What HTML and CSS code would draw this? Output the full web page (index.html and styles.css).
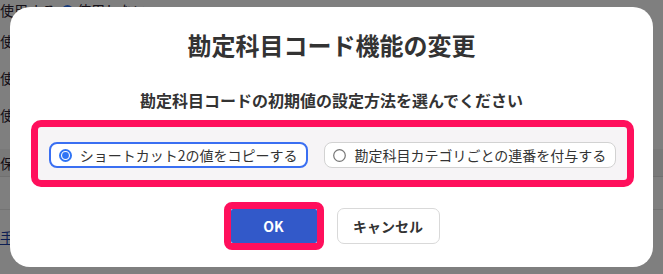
FILE: index.html
```html
<!DOCTYPE html>
<html lang="ja">
<head>
<meta charset="utf-8">
<title>勘定科目コード機能の変更</title>
<link rel="stylesheet" href="styles.css">
</head>
<body>
<div class="page">
  <div class="row first">使用する <span class="bg-radio"></span>使用しない</div>
  <div class="row">使用する</div>
  <div class="row">使用する</div>
  <div class="row">使用する</div>
  <div class="row band">保存する</div>
  <div class="row line"></div>
  <div class="row linkrow"><a class="link" href="#">手続き</a></div>
</div>
<div class="overlay">
  <div class="dialog">
    <h1 class="title">勘定科目コード機能の変更</h1>
    <p class="lead">勘定科目コードの初期値の設定方法を選んでください</p>
    <div class="highlight">
      <div class="options">
        <label class="option selected">
          <svg class="radio" width="13" height="13" viewBox="0 0 13 13"><circle cx="6.5" cy="6.5" r="5.5" fill="#fff" stroke="#2f74f5" stroke-width="2"/><circle cx="6.5" cy="6.5" r="3.4" fill="#2f74f5"/></svg>
          <span>ショートカット2の値をコピーする</span>
        </label>
        <label class="option">
          <svg class="radio" width="13" height="13" viewBox="0 0 13 13"><circle cx="6.5" cy="6.5" r="5.8" fill="#fff" stroke="#767676" stroke-width="1.2"/></svg>
          <span>勘定科目カテゴリごとの連番を付与する</span>
        </label>
      </div>
    </div>
    <div class="actions">
      <div class="ok-mark"><button class="btn primary">OK</button></div>
      <button class="btn secondary">キャンセル</button>
    </div>
  </div>
</div>
</body>
</html>
```
FILE: styles.css
```css
html, body {
  margin: 0;
  padding: 0;
}
body {
  width: 663px;
  height: 274px;
  overflow: hidden;
  background: #ffffff;
  font-family: "Noto Sans CJK JP", "Noto Sans", sans-serif;
  color: #333333;
}
.page {
  display: flex;
  flex-direction: column;
  font-size: 14px;
  color: #2a2030;
}
.row {
  height: 37px;
  line-height: 20px;
  display: flex;
  align-items: center;
  white-space: nowrap;
  box-sizing: border-box;
}
.row.first {
  height: 20px;
  margin-bottom: 2px;
}
.bg-radio {
  display: inline-block;
  width: 11px;
  height: 11px;
  border-radius: 50%;
  border: 2px solid #2f74f5;
  box-sizing: border-box;
  margin: 0 4px 0 6px;
  background: radial-gradient(circle, #2f74f5 45%, #fff 50%);
}
.row.band {
  background: #f2f2f2;
  height: 28px;
  margin-top: 16px;
  border-bottom: 1px solid #e0e0e0;
}
.row.line {
  height: 33px;
  border-bottom: 1px solid #e6e6e6;
}
.row.linkrow {
  height: 40px;
  margin-top: 7px;
}
.link {
  color: #1a3ea8;
  text-decoration: underline;
}
.overlay {
  position: fixed;
  inset: 0;
  background: rgba(0, 0, 0, 0.5);
  display: flex;
  align-items: center;
  justify-content: center;
}
.dialog {
  width: 643px;
  box-sizing: border-box;
  background: #ffffff;
  border-radius: 20px;
  padding: 22px 0 17px;
  display: flex;
  flex-direction: column;
  align-items: center;
}
.title {
  margin: 0 0 27px;
  font-size: 24px;
  line-height: 32px;
  font-weight: 700;
  color: #333333;
}
.lead {
  margin: 0 0 8px;
  font-size: 16px;
  line-height: 24px;
  font-weight: 700;
  color: #333333;
}
.highlight {
  width: 603px;
  box-sizing: border-box;
  border: 7px solid #ff0f5c;
  border-radius: 10px;
  background: #f6f4f6;
  padding: 15px 0 12px;
  margin-left: 2px;
}
.options {
  display: flex;
  justify-content: center;
  gap: 16px;
}
.option {
  height: 26px;
  box-sizing: border-box;
  display: flex;
  align-items: center;
  gap: 8px;
  padding: 0 9px 0 8px;
  border: 1px solid #d2d2d2;
  border-radius: 8px;
  background: #ffffff;
  font-size: 14px;
  line-height: 20px;
  color: #333333;
  white-space: nowrap;
}
.option.selected {
  border: 2px solid #3a6ff2;
}
.radio {
  display: block;
  flex: none;
}
.actions {
  margin-top: 15px;
  display: flex;
  align-items: center;
  gap: 13px;
}
.ok-mark {
  border: 7px solid #ff0f5c;
  border-radius: 8px;
  display: flex;
}
.btn {
  font-family: "Noto Sans CJK JP", "Noto Sans", sans-serif;
  font-size: 14px;
  font-weight: 700;
  margin: 0;
  box-sizing: border-box;
  cursor: pointer;
}
.btn.primary {
  width: 86px;
  height: 34px;
  border: none;
  border-radius: 2px;
  background: #3259c9;
  color: #ffffff;
}
.btn.secondary {
  width: 103px;
  height: 36px;
  border: 1px solid #d9d9d9;
  border-radius: 7px;
  background: #ffffff;
  color: #333333;
}
```
